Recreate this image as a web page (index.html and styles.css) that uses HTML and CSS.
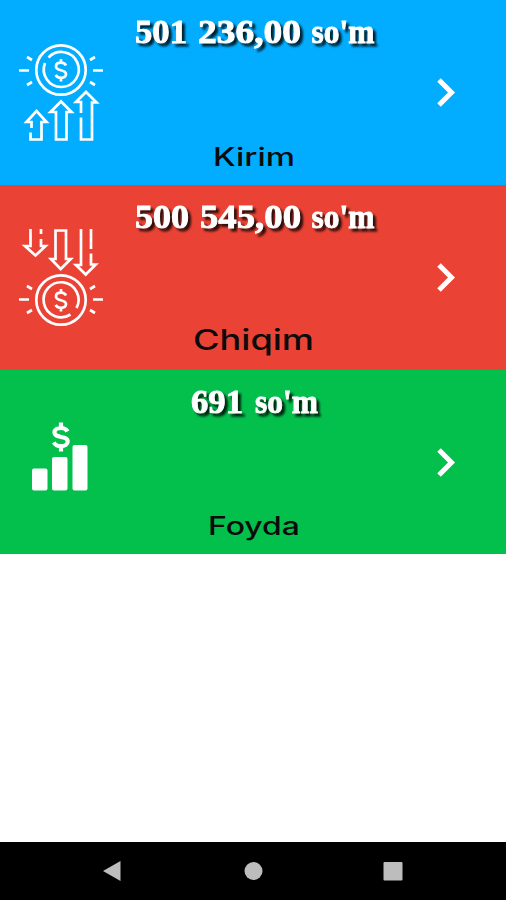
FILE: index.html
```html
<!DOCTYPE html>
<html lang="uz">
<head>
<meta charset="utf-8">
<meta name="viewport" content="width=device-width">
<title>Kirim Chiqim</title>
<link rel="stylesheet" href="styles.css">
</head>
<body>
<main class="screen">
  <section class="card income">
    <svg class="icon" viewBox="10 35 110 115">
      <g class="line">
        <circle cx="61" cy="70" r="24.7"/>
        <path d="M48.500 57.500A17.500 17.500 0 1 1 45 63"/>
        <path class="sign" d="M66 65.500c-1-2-2.800-2.800-5-2.800-3 0-5 1.500-5 3.700 0 5.200 10 2.400 10 7.700 0 2.300-2 3.800-5 3.800-2.500 0-4.400-1-5.300-3M61 59v3.500M61 78v3.500"/>
        <path d="M19 70.500h10M93 70.500h10M27 57l5 3M27 85l5-3M95 57l-5 3M95 85l-5-3"/>
        <path d="M31.500 128v-6H26.500L36.500 111 46.500 122H41.500v17.500H30.500v-7"/>
        <path d="M56 139.500V112H50.500L61 101.500 71.500 112H66.500v27.500z"/>
        <path d="M81 113v-11H76L86 92 96.500 102.500H92v37H81v-22"/>
      </g>
    </svg>
    <div class="info">
      <svg class="amount" viewBox="0 0 300 50"><text y="43" xml:space="preserve"><tspan x="32" textLength="52" lengthAdjust="spacingAndGlyphs">501</tspan> <tspan x="95" textLength="103" lengthAdjust="spacingAndGlyphs">236,00</tspan> <tspan x="208.500" textLength="63" lengthAdjust="spacingAndGlyphs">so'm</tspan></text></svg>
      <svg class="label" viewBox="0 0 300 50"><text x="110" y="30.500" font-size="25" textLength="82" lengthAdjust="spacingAndGlyphs">Kirim</text></svg>
    </div>
    <svg class="chevron" viewBox="0 0 24 36"><path d="M4 5 16.500 17.500 4 30"/></svg>
  </section>
  <section class="card expense">
    <svg class="icon" viewBox="10 220 110 115">
      <g class="line">
        <path d="M30.500 229v17h-5.500l10.500 9.500 10-9.500H41v-7M41 229v5"/>
        <path d="M55.500 230.500v28.500H51l9.700 10 10-10H66v-28.500z"/>
        <path d="M81 229v36h-5l9.700 9.500 10-10H91v-11M91 229v20"/>
        <circle cx="61" cy="300" r="24.700"/>
        <path d="M70.500 314.500A17.500 17.500 0 1 1 76.500 308"/>
        <path class="sign" d="M66 295.500c-1-2-2.800-2.800-5-2.800-3 0-5 1.500-5 3.700 0 5.200 10 2.400 10 7.700 0 2.300-2 3.800-5 3.800-2.500 0-4.400-1-5.300-3M61 289v3.500M61 308v3.500"/>
        <path d="M19 299.500h10M93 299.500h10M27 286l5 3M27 313l5-3M95 286l-5 3M95 313l-5-3"/>
      </g>
    </svg>
    <div class="info">
      <svg class="amount" viewBox="0 0 300 50"><text y="43" xml:space="preserve"><tspan x="32" textLength="54" lengthAdjust="spacingAndGlyphs">500</tspan> <tspan x="97" textLength="101" lengthAdjust="spacingAndGlyphs">545,00</tspan> <tspan x="208.500" textLength="63" lengthAdjust="spacingAndGlyphs">so'm</tspan></text></svg>
      <svg class="label" viewBox="0 0 300 50"><text x="90" y="30" font-size="28" textLength="121" lengthAdjust="spacingAndGlyphs">Chiqim</text></svg>
    </div>
    <svg class="chevron" viewBox="0 0 24 36"><path d="M4 5 16.500 17.500 4 30"/></svg>
  </section>
  <section class="card profit">
    <svg class="icon" viewBox="10 405 110 115">
      <g class="solid">
        <rect x="32" y="468.500" width="15.500" height="22" rx="2"/>
        <rect x="52" y="457" width="15.500" height="33.500" rx="2"/>
        <rect x="72.500" y="445" width="15" height="45.500" rx="2"/>
      </g>
      <path class="bold-sign" d="M67.500 431.500c-1.200-2.400-3.500-3.500-6.500-3.500-4 0-6.500 1.800-6.500 4.300 0 6.500 13.200 3 13.200 9.200 0 2.800-2.700 4.700-6.700 4.700-3.400 0-6-1.300-7.200-3.800M61 422.500v5.500M61 446v5.500"/>
    </svg>
    <div class="info">
      <svg class="amount" viewBox="0 0 300 50"><text y="43" xml:space="preserve"><tspan x="88" textLength="52" lengthAdjust="spacingAndGlyphs">691</tspan> <tspan x="152" textLength="63" lengthAdjust="spacingAndGlyphs">so'm</tspan></text></svg>
      <svg class="label" viewBox="0 0 300 50"><text x="105" y="30.500" font-size="25" textLength="92" lengthAdjust="spacingAndGlyphs">Foyda</text></svg>
    </div>
    <svg class="chevron" viewBox="0 0 24 36"><path d="M4 5 16.500 17.500 4 30"/></svg>
  </section>
  <nav class="navbar">
    <svg viewBox="0 0 20 22"><path d="M1 11 18.500 1v20z"/></svg>
    <svg viewBox="0 0 20 22"><circle cx="10.500" cy="11" r="9"/></svg>
    <svg viewBox="0 0 20 22"><rect x=".5" y="2" width="19" height="18.500" rx="1"/></svg>
  </nav>
</main>
</body>
</html>
```
FILE: styles.css
```css
body {
  margin: 0;
  background: #fff;
}

.screen {
  display: flex;
  flex-direction: column;
  height: 900px;
  width: 506px;
}

.card {
  display: grid;
  grid-template-columns: 110px 300px 24px;
  box-sizing: border-box;
  height: 184.800px;
  padding-left: 10px;
  flex: none;
}

.income { background: #02adff; }
.expense { background: #ea4335; }
.profit { background: #03bf4c; }

.icon {
  width: 110px;
  height: 115px;
  margin-top: 35px;
}

.line path,
.line circle {
  fill: none;
  stroke: #fff;
  stroke-width: 2.700;
}

.solid { fill: #fff; }

.bold-sign {
  fill: none;
  stroke: #fff;
  stroke-width: 4.200;
}

.info {
  display: flex;
  flex-direction: column;
  justify-content: space-between;
  margin-left: -17px;
  width: 300px;
}

.amount,
.label {
  display: block;
  width: 300px;
  height: 50px;
}

.amount {
  filter: drop-shadow(3px 3px 1px rgba(0, 0, 0, .8));
}

.amount text {
  font: bold 33px "Liberation Serif", serif;
  fill: #fff;
  stroke: #fff;
  stroke-width: .9;
}

.label text {
  font-family: Inter, sans-serif;
  font-weight: 500;
  fill: #0b0b0b;
}

.chevron {
  width: 24px;
  height: 36px;
  margin-top: 75px;
  margin-left: 15px;
}

.chevron path {
  fill: none;
  stroke: #fff;
  stroke-width: 5;
}

.navbar {
  display: flex;
  box-sizing: border-box;
  justify-content: space-between;
  align-items: center;
  height: 58px;
  margin-top: auto;
  padding: 0 103px 0 102px;
  background: #000;
}

.navbar svg {
  width: 20px;
  height: 22px;
  fill: #bdbdbd;
}
```
